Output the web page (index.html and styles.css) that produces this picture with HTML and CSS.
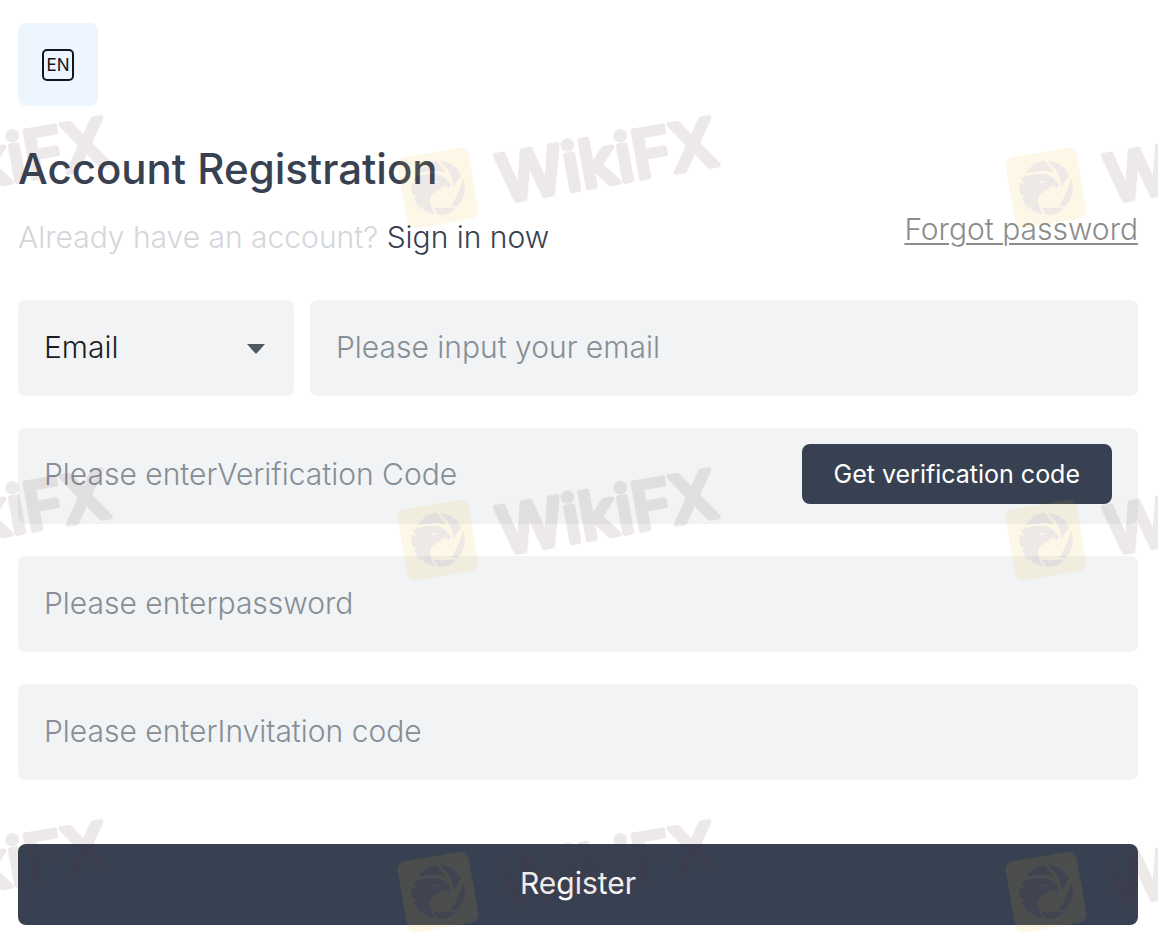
FILE: index.html
```
<!DOCTYPE html>
<html lang="en">
<head>
    <meta charset="UTF-8"/>
    <meta name="viewport" content="width=device-width, initial-scale=1"/>
    <title>Account Registration</title>
    <link rel="stylesheet" href="styles.css">
</head>
<body>
<main class="page">
    <button class="lang-btn" type="button" aria-label="Language">
        <svg viewBox="0 0 34 34" width="34" height="34">
            <rect x="2" y="2" width="30" height="30" rx="4" fill="none" stroke="#14161f" stroke-width="2"/>
            <text x="17" y="23" text-anchor="middle" class="lang-text">EN</text>
        </svg>
    </button>

    <h1>Account Registration</h1>
    <div class="sub-row">
        <p class="signin">Already have an account? <a href="#signin">Sign in now</a></p>
        <a class="forgot" href="#forgot">Forgot password</a>
    </div>

    <form class="form">
        <div class="account-row">
            <div class="select-wrap">
                <select class="field" aria-label="Account type">
                    <option>Email</option>
                    <option>Phone</option>
                </select>
                <svg class="arrow" viewBox="0 0 18 10" width="18" height="10"><path d="M0 0H18L10 9Q9 10 8 9Z" fill="#4f585e"/></svg>
            </div>
            <input class="field" type="email" placeholder="Please input your email" aria-label="Email"/>
        </div>
        <div class="field code-row">
            <input type="text" placeholder="Please enterVerification Code" aria-label="Verification code"/>
            <button class="code-btn" type="button">Get verification code</button>
        </div>
        <input class="field" type="password" placeholder="Please enterpassword" aria-label="Password"/>
        <input class="field" type="text" placeholder="Please enterInvitation code" aria-label="Invitation code"/>
        <button class="register-btn" type="submit">Register</button>
    </form>
</main>

<!-- repeating watermark -->
<svg class="watermark" width="100%" height="100%" aria-hidden="true">
    <defs>
        <!-- eagle head inside a shutter ring -->
        <g id="bird">
            <path d="M-17 -19C-12 -25 -7 -27 -1 -27L8 -15C0 -19 -9 -17 -20 -15Z"/>
            <path d="M2 -27C13 -26 20 -20 23 -13L15 0C16 -11 10 -20 2 -27Z"/>
            <path d="M25 -10C29 1 26 12 19 18L13 17C18 10 23 1 25 -10Z"/>
            <path d="M18 20C11 27 4 28 -1 26L-5 19C3 22 10 18 18 20Z"/>
            <path fill-rule="evenodd" d="M-21 -12C-14 -13 -8 -15 -2 -14C5 -13 9 -9 10 -6C13 -5 13 -3 12 0L8 -2L1 -1L4 1C-3 2 -9 7 -8 14C-7 19 -5 23 -3 26C-7 26 -11 24 -14 22L-17 15L-16 22C-20 18 -23 14 -24 10L-20 7L-25 7C-27 3 -27 -2 -26 -5L-20 -4L-25 -8ZM-8 -7L0 -7L-3 -5Z"/>
        </g>
        <mask id="cut" maskUnits="userSpaceOnUse" x="0" y="0" width="130" height="140">
            <rect width="130" height="140" fill="#ffffff"/>
            <use href="#bird" x="58" y="88" fill="#555555"/>
        </mask>
        <pattern id="mark" x="380" y="100" width="608" height="352" patternUnits="userSpaceOnUse">
            <g mask="url(#cut)">
                <rect class="mark-box" x="22" y="52" width="72" height="72" rx="8" transform="rotate(-10 58 88)"/>
            </g>
            <use class="mark-bird" href="#bird" x="58" y="88"/>
            <text class="mark-text" transform="translate(122 103) rotate(-10)">WikiFX</text>
        </pattern>
    </defs>
    <rect width="100%" height="100%" fill="url(#mark)"/>
</svg>
</body>
</html>
```

FILE: styles.css
```
* {
  box-sizing: border-box;
}

body {
  margin: 0;
  background-color: #ffffff;
  color: #384151;
  font-family: Inter, "Open Sans", sans-serif;
  font-size: 30px;
  font-weight: 300;
}

.page {
  padding: 23px 20px 12px 18px;
}

button,
input,
select {
  font: inherit;
  border: none;
}

button {
  cursor: pointer;
}

/* ========== HEADER ========== */
.lang-btn {
  display: flex;
  align-items: center;
  justify-content: center;
  width: 80px;
  height: 83px;
  background-color: #edf5ff;
  border-radius: 8px;
}

.lang-text {
  font-size: 17px;
  font-weight: 400;
  fill: #14161f;
}

h1 {
  margin: 33px 0 0;
  font-size: 42px;
  font-weight: 500;
  line-height: 60px;
}

.sub-row {
  display: flex;
  justify-content: space-between;
  align-items: flex-start;
  margin-top: 10px;
  line-height: 40px;
}

.signin {
  margin: 8px 0 0;
  color: #d3d6da;
}

.signin a {
  color: #384151;
  text-decoration: none;
}

.forgot {
  color: #8c8c8c;
  text-decoration-thickness: 2px;
  text-underline-offset: 3px;
}

/* ========== FORM ========== */
.form {
  display: flex;
  flex-direction: column;
  gap: 32px;
  margin-top: 43px;
}

.account-row {
  display: grid;
  grid-template-columns: 276px 1fr;
  gap: 16px;
}

.field {
  width: 100%;
  height: 96px;
  padding: 0 26px 2px;
  background-color: #f1f3f5;
  color: #1a1d21;
  border-radius: 8px;
}

.select-wrap {
  position: relative;
}

.select-wrap select {
  appearance: none;
}

.arrow {
  position: absolute;
  right: 29px;
  top: 44px;
  pointer-events: none;
}

input::placeholder {
  color: #868e96;
  opacity: 1;
}

.code-row {
  display: flex;
  align-items: center;
  gap: 16px;
  padding-bottom: 4px;
}

.code-row input {
  flex: 1;
  min-width: 0;
  padding: 0;
  background: none;
}

.code-btn {
  height: 60px;
  padding: 0 32px;
  background-color: #384151;
  color: #ffffff;
  font-size: 25px;
  font-weight: 400;
  border-radius: 8px;
}

.register-btn {
  height: 81px;
  margin-top: 32px;
  padding-bottom: 4px;
  background-color: #384151;
  color: #ffffff;
  font-weight: 400;
  border-radius: 8px;
}

/* ========== WATERMARK ========== */
.watermark {
  position: absolute;
  inset: 0;
  pointer-events: none;
}

.mark-box {
  fill: #e0b420;
  opacity: 0.11;
}

.mark-bird {
  fill: #5a3050;
  opacity: 0.1;
}

.mark-text {
  font-size: 66px;
  font-weight: 500;
  fill: #501e1e;
  stroke: #501e1e;
  stroke-width: 5;
  stroke-linejoin: round;
  opacity: 0.1;
}
```
